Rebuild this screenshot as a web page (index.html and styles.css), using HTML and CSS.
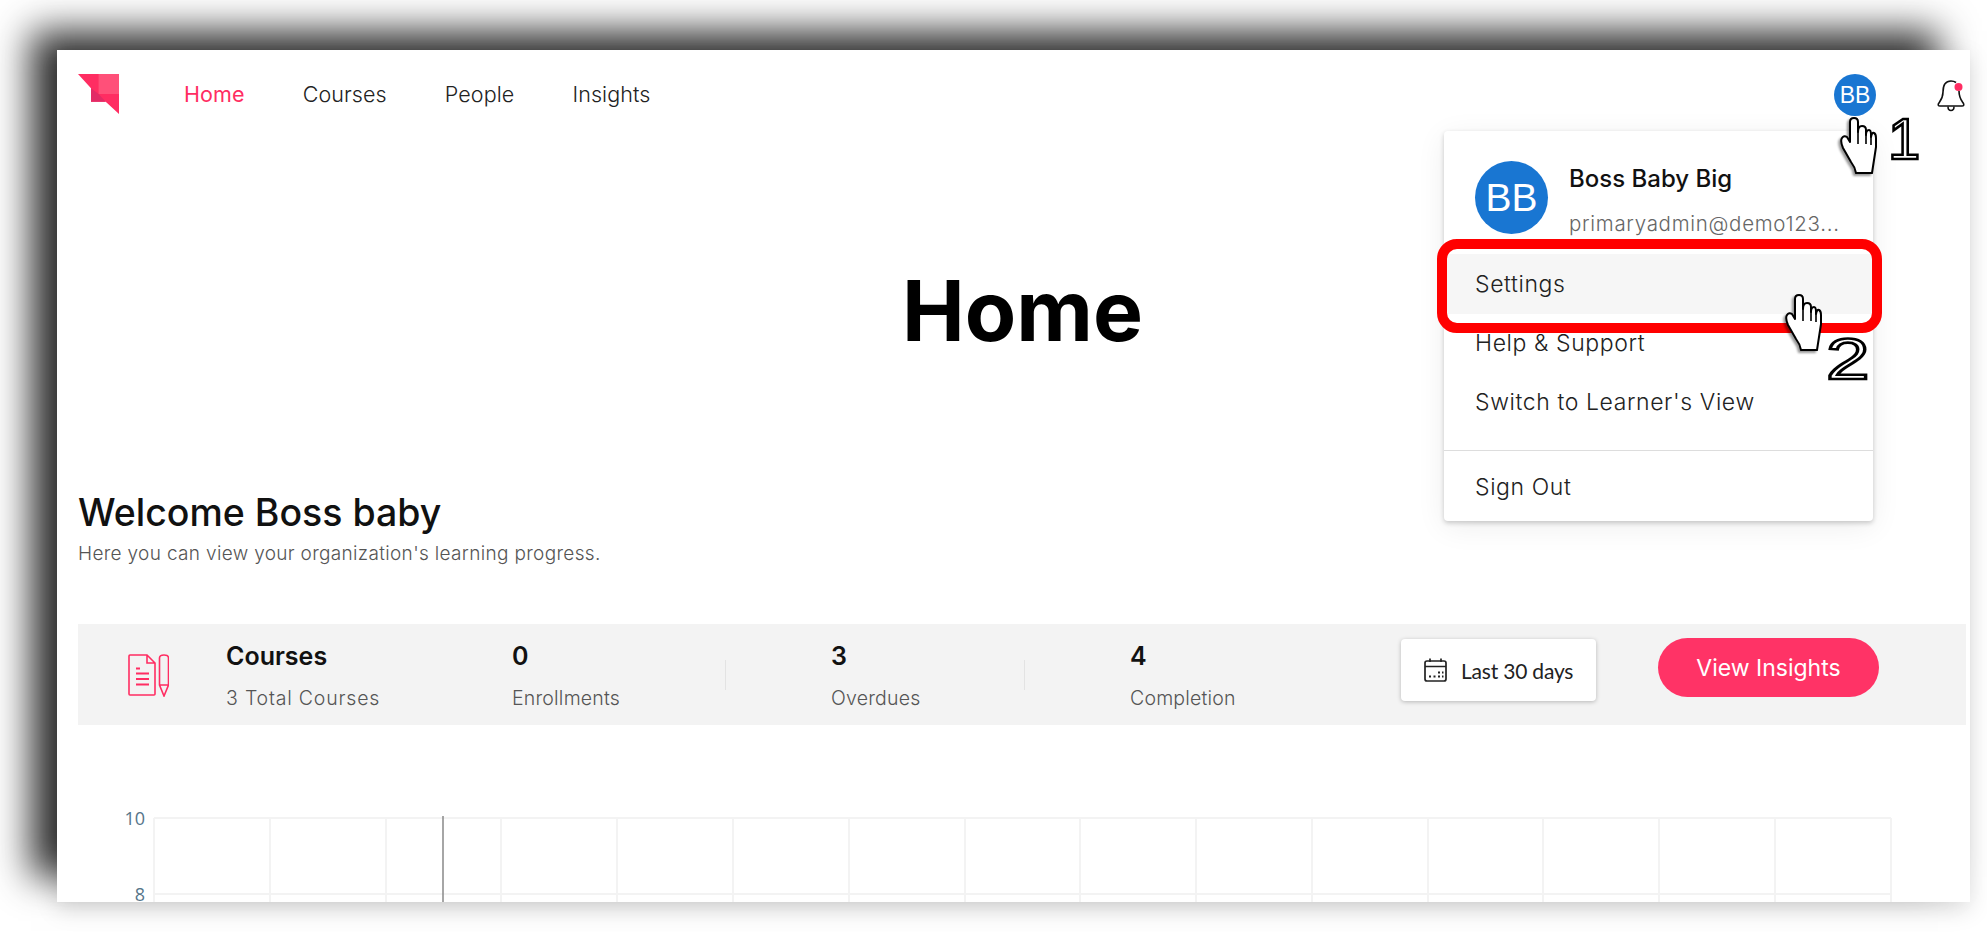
FILE: index.html
```html
<!DOCTYPE html>
<html lang="en">
<head>
  <meta charset="UTF-8">
  <title>Home</title>
  <link rel="stylesheet" href="styles.css">
</head>
<body>
  <svg class="defs" width="0" height="0">
    <symbol id="hand" viewBox="-1 0 37 58">
      <path d="M9 25 L9 5 Q9 1 13 1 Q17 1 17 5 L17 15 Q17 9 21 9 Q25 9 25 13 L25 18 Q25 13 28 13 Q30 13 30 18 L30 20 Q31 15 33 16 Q35 17 35 21 L35 30 L31 56 L15 56 Q14 50 10 45 L2 31 Q-1 24 1 21 Q3 18 6 20 Z" fill="#fff" stroke="#000" stroke-width="2" stroke-linejoin="round"/>
      <path d="M17 15 L17 27 M25 17 L25 27 M30 19 L30 28" fill="none" stroke="#000" stroke-width="1.6"/>
    </symbol>
  </svg>

  <div class="window">
    <header class="topbar">
      <svg class="logo" width="41" height="40" viewBox="0 0 41 40">
        <polygon points="0,0 41,0 41,40 27.7,27.7 13,27.7 13,14.3" fill="#ff2d62"/>
        <polygon points="20.6,0 41,0 41,20 20.6,20" fill="#ff5079"/>
        <polygon points="13,14.3 20.6,20 27.7,27.7 13,27.7" fill="#e22b66"/>
      </svg>
      <nav class="nav">
        <a class="nav-link active">Home</a>
        <a class="nav-link">Courses</a>
        <a class="nav-link">People</a>
        <a class="nav-link">Insights</a>
      </nav>
      <div class="avatar">BB</div>
      <svg class="bell" width="28" height="32" viewBox="0 0 28 32">
        <path d="M19 2.5 C17 1 15 1 14 1 C8 1 6 6 6 12 C6 18 4 20 1.5 23.5 Q0.5 26 3 26 L25 26 Q27.5 26 26.5 23.5 C24 20 22 18 22 11" fill="none" stroke="#111" stroke-width="1.6"/>
        <path d="M11 26.5 Q11 30.5 14 30.5 Q17 30.5 17 26.5" fill="none" stroke="#111" stroke-width="1.6"/>
        <circle cx="21.5" cy="7" r="4" fill="#ff2d62"/>
      </svg>
    </header>

    <h1 class="page-title">Home</h1>

    <h2 class="welcome">Welcome Boss baby</h2>
    <p class="welcome-sub">Here you can view your organization's learning progress.</p>

    <section class="stats">
      <svg class="stats-icon" width="41" height="43" viewBox="0 0 41 43">
        <path d="M1 2 Q1 1 2 1 L19 1 L27 9 L27 40 Q27 41 26 41 L2 41 Q1 41 1 40 Z M19 1 L19 9 L27 9" fill="none" stroke="#ff2d62" stroke-width="1.6"/>
        <path d="M8 14.5 L12 14.5 M8 19.5 L21 19.5 M8 25 L21 25 M8 30.5 L21 30.5" stroke="#ff2d62" stroke-width="1.8"/>
        <path d="M31.5 4 Q31.5 1 36 1 Q40.5 1 40.5 4 L40.5 31 L36 42 L31.5 31 Z M31.5 31 L40.5 31" fill="none" stroke="#ff2d62" stroke-width="1.6"/>
      </svg>
      <div class="stat stat-courses">
        <div class="stat-value">Courses</div>
        <div class="stat-label">3 Total Courses</div>
      </div>
      <div class="stat stat-enrol">
        <div class="stat-value">0</div>
        <div class="stat-label">Enrollments</div>
      </div>
      <div class="stat-sep"></div>
      <div class="stat stat-overdue">
        <div class="stat-value">3</div>
        <div class="stat-label">Overdues</div>
      </div>
      <div class="stat-sep"></div>
      <div class="stat stat-complete">
        <div class="stat-value">4</div>
        <div class="stat-label">Completion</div>
      </div>
      <button class="date-btn">
        <svg width="23" height="24" viewBox="0 0 23 24">
          <rect x="1" y="3" width="21" height="20" rx="2" fill="none" stroke="#222" stroke-width="1.7"/>
          <path d="M1 8.5 L22 8.5 M6 0.5 L6 4 M17 0.5 L17 4" stroke="#222" stroke-width="1.7"/>
          <path d="M5 18.5 h2 M9.5 18.5 h2 M14 18.5 h2 M14 14.5 h2 M18 14.5 h1.5 M18 18.5 h1.5" stroke="#222" stroke-width="2"/>
        </svg>
        Last 30 days
      </button>
      <button class="insights-btn">View Insights</button>
    </section>

    <svg class="chart" width="1913" height="92" viewBox="57 810 1913 92">
      <g stroke="#f3f3f3" stroke-width="2" fill="none">
        <path d="M154 818 H1891 M154 894 H1891"/>
        <path d="M154 818 V902 M270 818 V902 M386 818 V902 M501 818 V902 M617 818 V902 M733 818 V902 M849 818 V902 M965 818 V902 M1080 818 V902 M1196 818 V902 M1312 818 V902 M1428 818 V902 M1543 818 V902 M1659 818 V902 M1775 818 V902 M1891 818 V902"/>
      </g>
      <path d="M443 816 V902" stroke="#888" stroke-width="1.5"/>
      <text class="axis-label" x="145" y="825">10</text>
      <text class="axis-label" x="145" y="901">8</text>
    </svg>

    <!-- dropdown open under the avatar -->
    <div class="menu">
      <div class="menu-head">
        <div class="menu-avatar">BB</div>
        <div class="menu-user">
          <div class="menu-name">Boss Baby Big</div>
          <div class="menu-email">primaryadmin@demo123...</div>
        </div>
      </div>
      <div class="menu-item hover">Settings</div>
      <div class="menu-item">Help &amp; Support</div>
      <div class="menu-item">Switch to Learner's View</div>
      <div class="menu-line"></div>
      <div class="menu-item last">Sign Out</div>
    </div>

    <!-- annotations pasted on the screenshot -->
    <div class="red-box"></div>
    <svg class="hand hand-one" width="37" height="58"><use href="#hand"/></svg>
    <svg class="hand hand-two" width="37" height="58"><use href="#hand"/></svg>
    <span class="step step-one">1</span>
    <span class="step step-two">2</span>
  </div>
</body>
</html>
```

FILE: styles.css
```css
html, body {
  margin: 0;
  padding: 0;
  height: 934px;
  overflow: hidden;
  background-color: #fff;
  font-family: Inter, "Noto Sans", sans-serif;
}

.defs {
  position: absolute;
}

.window {
  position: relative;
  box-sizing: border-box;
  width: 1913px;
  height: 852px;
  margin: 50px 0 0 57px;
  background-color: #fff;
  box-shadow: -29px -22px 36px -3px #2e2e2e, 0 8px 22px rgba(0, 0, 0, 0.13);
}

.topbar {
  display: flex;
  align-items: flex-start;
  height: 64px;
  padding: 24px 0 0 21px;
  box-sizing: border-box;
}

.nav {
  display: flex;
  gap: 58px;
  margin-left: 65px;
}

.nav-link {
  font-size: 21.5px;
  line-height: 41px;
  letter-spacing: 0.1px;
  color: #222;
  font-weight: 300;
}

.nav-link.active {
  color: #ff2d62;
  font-weight: 400;
}

.avatar {
  width: 42px;
  height: 42px;
  border-radius: 50%;
  background-color: #1976d2;
  color: #fff;
  font-family: "Liberation Sans", sans-serif;
  font-size: 23px;
  line-height: 42px;
  text-align: center;
  position: absolute;
  left: 1777px;
  top: 24px;
}

.bell {
  position: absolute;
  left: 1880px;
  top: 30px;
}

.page-title {
  margin: 147px 0 0;
  padding-left: 18px;
  font-size: 84px;
  line-height: 100px;
  font-weight: 700;
  color: #000;
  text-align: center;
}

.welcome {
  margin: 128px 0 0 21px;
  font-size: 37.5px;
  line-height: 48px;
  font-weight: 500;
  color: #111;
}

.welcome-sub {
  margin: 5px 0 0 21px;
  font-size: 19px;
  line-height: 24px;
  letter-spacing: 0.33px;
  font-weight: 300;
  color: #555;
}

.stats {
  display: flex;
  align-items: flex-start;
  width: 1888px;
  height: 101px;
  margin: 58px 0 0 21px;
  padding-left: 50px;
  box-sizing: border-box;
  background-color: #f3f3f3;
}

.stats-icon {
  flex: none;
  margin-top: 30px;
}

.stat {
  flex: none;
  padding-top: 17px;
}

.stat-courses {
  width: 286px;
  margin-left: 57px;
}

.stat-enrol {
  width: 213px;
}

.stat-overdue {
  width: 193px;
  margin-left: 105px;
}

.stat-complete {
  width: 271px;
  margin-left: 105px;
}

.stat-value {
  font-size: 25px;
  line-height: 30px;
  font-weight: 600;
  color: #111;
}

.stat-label {
  margin-top: 14px;
  font-size: 19.5px;
  line-height: 26px;
  letter-spacing: 0.2px;
  font-weight: 300;
  color: #555;
}

.stat-courses .stat-label {
  letter-spacing: 0.8px;
}

.stat-sep {
  flex: none;
  width: 1px;
  height: 30px;
  margin-top: 36px;
  background-color: #e3e3e3;
}

.date-btn {
  flex: none;
  display: flex;
  align-items: center;
  gap: 14px;
  width: 195px;
  height: 62px;
  margin-top: 15px;
  padding: 0 0 0 23px;
  border: none;
  border-radius: 4px;
  background-color: #fff;
  box-shadow: 0 1px 4px rgba(0, 0, 0, 0.25);
  font-family: Lato, sans-serif;
  font-size: 21px;
  letter-spacing: -0.2px;
  color: #222;
}

.insights-btn {
  flex: none;
  width: 221px;
  height: 59px;
  margin: 14px 0 0 62px;
  border: none;
  border-radius: 30px;
  background-color: #ff3366;
  color: #fff;
  font-family: Inter, sans-serif;
  font-size: 23px;
  font-weight: 400;
}

.chart {
  display: block;
  margin-top: 85px;
  overflow: visible;
}

.axis-label {
  font-family: "Open Sans", sans-serif;
  font-size: 18px;
  fill: #56758a;
  text-anchor: end;
}

.menu {
  position: absolute;
  left: 1387px;
  top: 81px;
  width: 429px;
  height: 390px;
  background-color: #fff;
  border-radius: 4px;
  box-shadow: 0 2px 5px rgba(0, 0, 0, 0.2), 0 6px 30px rgba(0, 0, 0, 0.07);
}

.menu-head {
  display: flex;
  gap: 21px;
  height: 123px;
  padding: 30px 0 0 31px;
  box-sizing: border-box;
}

.menu-avatar {
  width: 73px;
  height: 73px;
  border-radius: 50%;
  background-color: #1976d2;
  color: #fff;
  font-family: "Liberation Sans", sans-serif;
  font-size: 39px;
  line-height: 73px;
  text-align: center;
}

.menu-name {
  margin-top: 3px;
  font-size: 24px;
  line-height: 30px;
  font-weight: 500;
  color: #111;
}

.menu-email {
  margin-top: 17px;
  font-size: 20.5px;
  line-height: 26px;
  letter-spacing: 0.7px;
  font-weight: 300;
  color: #666;
}

.menu-item {
  height: 59px;
  padding-left: 31px;
  font-size: 23px;
  line-height: 59px;
  letter-spacing: 0.6px;
  font-weight: 300;
  color: #222;
}

.menu-item.hover {
  height: 60px;
  line-height: 60px;
  background-color: #f6f6f6;
}

.menu-item.last {
  height: 60px;
  line-height: 60px;
}

.menu-line {
  height: 1px;
  margin: 18px 0 6px;
  background-color: #ddd;
}

.red-box {
  position: absolute;
  left: 1380px;
  top: 189px;
  width: 445px;
  height: 94px;
  box-sizing: border-box;
  border: 10px solid #f00;
  border-radius: 20px;
}

.hand {
  position: absolute;
  filter: drop-shadow(-2px 2px 1px rgba(0, 0, 0, 0.4));
}

.hand-one {
  left: 1783px;
  top: 67px;
}

.hand-two {
  left: 1728px;
  top: 244px;
}

.step {
  position: absolute;
  font-family: "Liberation Sans", sans-serif;
  font-size: 58px;
  line-height: 58px;
  color: #fff;
  -webkit-text-stroke: 2.6px #000;
}

.step-one {
  left: 1831px;
  top: 60px;
}

.step-two {
  left: 1769px;
  top: 280px;
  transform: scaleX(1.35);
  transform-origin: left top;
}
```
